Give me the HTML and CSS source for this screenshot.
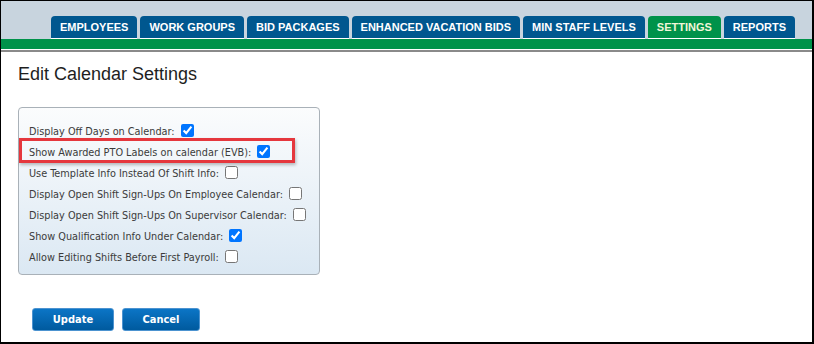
FILE: index.html
```html
<!DOCTYPE html>
<html lang="en">
<head>
    <meta charset="UTF-8">
    <title>Edit Calendar Settings</title>
    <link rel="stylesheet" href="styles.css">
</head>
<body>
    <div class="frame">
        <div class="header">
            <ul class="tabs">
                <li class="tab">EMPLOYEES</li>
                <li class="tab">WORK GROUPS</li>
                <li class="tab">BID PACKAGES</li>
                <li class="tab">ENHANCED VACATION BIDS</li>
                <li class="tab">MIN STAFF LEVELS</li>
                <li class="tab active">SETTINGS</li>
                <li class="tab">REPORTS</li>
            </ul>
        </div>
        <div class="green-bar"></div>

        <div class="content">
            <h1>Edit Calendar Settings</h1>

            <div class="settings-panel">
                <div class="highlight"></div>
                <label class="row">Display Off Days on Calendar: <input type="checkbox" checked></label>
                <label class="row">Show Awarded PTO Labels on calendar (EVB): <input type="checkbox" checked></label>
                <label class="row">Use Template Info Instead Of Shift Info: <input type="checkbox"></label>
                <label class="row">Display Open Shift Sign-Ups On Employee Calendar: <input type="checkbox"></label>
                <label class="row">Display Open Shift Sign-Ups On Supervisor Calendar: <input type="checkbox"></label>
                <label class="row">Show Qualification Info Under Calendar: <input type="checkbox" checked></label>
                <label class="row">Allow Editing Shifts Before First Payroll: <input type="checkbox"></label>
            </div>

            <div class="buttons">
                <button class="btn btn-update">Update</button>
                <button class="btn btn-cancel">Cancel</button>
            </div>
        </div>
    </div>
</body>
</html>
```

FILE: styles.css
```css
html, body {
    margin: 0;
    padding: 0;
    background: #fff;
}

.frame {
    box-sizing: border-box;
    width: 814px;
    height: 344px;
    border-style: solid;
    border-color: #000;
    border-width: 1px 2px 2px 1px;
    overflow: hidden;
    font-family: "Liberation Sans", Arial, sans-serif;
}

.header {
    background: #c8d4de;
    padding: 15px 0 0 50px;
}

.tabs {
    list-style: none;
    margin: 0;
    padding: 0;
    display: flex;
    gap: 3px;
}

.tab {
    height: 22px;
    line-height: 23px;
    padding: 0 9px;
    background: #00578f;
    color: #fff;
    font-size: 11px;
    font-weight: bold;
    border-radius: 4px 4px 0 0;
    border-bottom: 1px solid #fff;
    white-space: nowrap;
}

.tab.active {
    background: #00924a;
    color: #f2f6d8;
}

.green-bar {
    height: 10px;
    background: #00924a;
    border-bottom: 1px solid #fff;
    box-shadow: 0 2px 0 #8a8a8a;
}

.content {
    padding: 14px 0 0 17px;
}

h1 {
    margin: 0;
    font-size: 18px;
    line-height: 21px;
    font-weight: normal;
    color: #1e1e1e;
}

.settings-panel {
    position: relative;
    box-sizing: border-box;
    width: 302px;
    height: 168px;
    margin-top: 22px;
    padding: 13px 0 0 10px;
    border: 1px solid #a9b1b8;
    border-radius: 4px;
    background: linear-gradient(#fbfcfd, #dbe8f3);
    display: flex;
    flex-direction: column;
}

.row {
    height: 21px;
    display: flex;
    align-items: center;
    gap: 2px;
    white-space: nowrap;
    font-family: "DejaVu Sans Condensed", "DejaVu Sans", sans-serif;
    font-size: 10.8px;
    color: #3b3b3b;
}

.row input {
    flex: none;
    width: 13px;
    height: 13px;
    margin: 0 0 2px 4px;
}

.highlight {
    position: absolute;
    left: 0;
    top: 30px;
    width: 276px;
    height: 25px;
    box-sizing: border-box;
    border: 3px solid #e5373d;
    box-shadow: 1px 2px 3px rgba(0, 0, 0, 0.25);
    pointer-events: none;
}

.buttons {
    display: flex;
    gap: 8px;
    margin: 33px 0 0 14px;
}

.btn {
    height: 23px;
    border: 1px solid #4c93d0;
    border-radius: 3px;
    background: linear-gradient(#0b75c6, #005a9e);
    color: #fff;
    font-family: "DejaVu Sans Condensed", "DejaVu Sans", sans-serif;
    font-size: 11px;
    font-weight: bold;
    padding: 0;
}

.btn-update {
    width: 82px;
}

.btn-cancel {
    width: 78px;
}
```
